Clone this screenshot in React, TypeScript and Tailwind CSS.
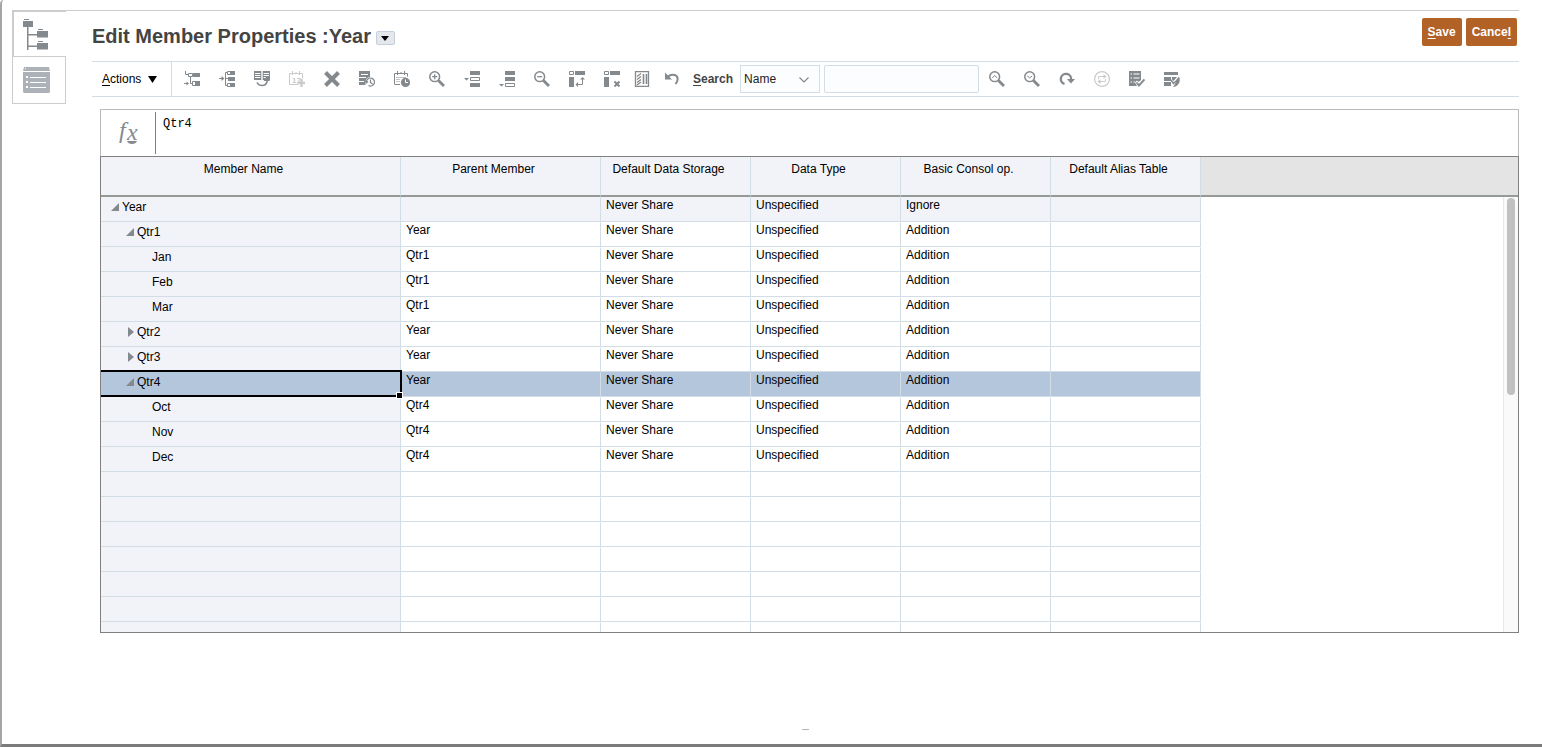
import type { ReactNode } from "react"

interface Member {
  name: string
  level: number
  state?: "open" | "closed"
  parent: string
  consol: string
}

const members: Member[] = [
  { name: "Year", level: 0, state: "open", parent: "", consol: "Ignore" },
  { name: "Qtr1", level: 1, state: "open", parent: "Year", consol: "Addition" },
  { name: "Jan", level: 2, parent: "Qtr1", consol: "Addition" },
  { name: "Feb", level: 2, parent: "Qtr1", consol: "Addition" },
  { name: "Mar", level: 2, parent: "Qtr1", consol: "Addition" },
  { name: "Qtr2", level: 1, state: "closed", parent: "Year", consol: "Addition" },
  { name: "Qtr3", level: 1, state: "closed", parent: "Year", consol: "Addition" },
  { name: "Qtr4", level: 1, state: "open", parent: "Year", consol: "Addition" },
  { name: "Oct", level: 2, parent: "Qtr4", consol: "Addition" },
  { name: "Nov", level: 2, parent: "Qtr4", consol: "Addition" },
  { name: "Dec", level: 2, parent: "Qtr4", consol: "Addition" },
]

const columns = [
  "Member Name",
  "Parent Member",
  "Default Data Storage",
  "Data Type",
  "Basic Consol op.",
  "Default Alias Table",
]

const selectedMember = "Qtr4"
const emptyRows = [0, 1, 2, 3, 4, 5, 6]
const indents = ["pl-[9px]", "pl-[24px]", "pl-[39px]"]

function Tool({ label, disabled, children }: { label: string; disabled?: boolean; children: ReactNode }) {
  return (
    <button
      type="button"
      aria-label={label}
      disabled={disabled}
      className={disabled ? "shrink-0 text-[#c9cbcd]" : "shrink-0 text-[#84898d]"}
    >
      <svg width="16" height="16" viewBox="0 0 16 16" fill="none" stroke="currentColor" className="block">
        {children}
      </svg>
    </button>
  )
}

function Magnifier({ children }: { children: ReactNode }) {
  return (
    <>
      <circle cx="5.7" cy="5.7" r="4.9" strokeWidth="1.5" />
      <path d="M9.4 9.4 15 15" strokeWidth="2.8" />
      {children}
    </>
  )
}

function LeftTools() {
  return (
    <div className="flex items-center gap-[19px]">
      <Tool label="Add child">
        <path d="M1.5 0v3.5H5M6.5 6v6.5H9M0 12.5h4" />
        <path d="M2.5 10.500v4l2.500-2z" fill="currentColor" stroke="none" />
        <path d="M4.500 2.500h4v3h-4zM8.500 10.500h3v4h-3z" />
        <path d="M9 2h7v4H9zM11 10h5v5h-5z" fill="currentColor" stroke="none" />
      </Tool>
      <Tool label="Add sibling">
        <path d="M8 1.500H6.500v13H8M6.500 7.500H9M0 7.500h4" />
        <path d="M2.500 5v5l3-2.500z" fill="currentColor" stroke="none" />
        <path d="M8.500.500h3v3h-3zM8.500 12.500h3v3h-3z" />
        <path d="M11 0h5v4h-5zM9 6h7v4H9zM11 12h5v4h-5z" fill="currentColor" stroke="none" />
      </Tool>
      <Tool label="Move">
        <path d="M0 0h7.300v9H0zM8.700 0H16v9H8.700z" fill="currentColor" stroke="none" />
        <path d="M1 2.500h5.300M1 4.500h5.300M1 6.500h5.300M9.700 2.500H15M9.700 4.500H15M9.700 6.500h2" stroke="white" />
        <path d="M3 11.500c2 4 8.500 4 10-.5V9" strokeWidth="1.600" />
        <path d="m9.500 10 3.500-4.500 3 4.500z" fill="currentColor" stroke="none" />
      </Tool>
      <Tool label="Add period" disabled>
        <path d="M.5 13.500v-11h13v5M.5 13.500H9M3.500 0v4M7 1v2M10.500 0v4" />
        <text
          x="3"
          y="12"
          fill="currentColor"
          stroke="none"
          className="font-['Liberation_Sans'] text-[8px] font-bold"
        >
          17
        </text>
        <path d="M12.500 8v8M8.500 12H16" strokeWidth="2.400" />
      </Tool>
      <Tool label="Delete">
        <path d="m1.500 1.500 13 13M14.500 1.500l-13 13" strokeWidth="4" />
      </Tool>
      <Tool label="Document history">
        <path d="M0 0h11v6C7.500 6.500 6 9 6.500 14H0z" fill="currentColor" stroke="none" />
        <path d="M2 3.500h7M0 6.500h7M0 10.500h5" stroke="white" />
        <path d="M7.500 11.500a4 4 0 1 1 2 3M11.500 8.500v3l2 1.500" strokeWidth="1.200" />
        <path d="m5.500 10 4 .3-2 2.700z" fill="currentColor" stroke="none" />
      </Tool>
      <Tool label="Schedule">
        <path d="M.5 13V2.500h13v3M.5 13.500H6M3.500 0v4M7 1v2M10.500 0v4" />
        <path d="M2.500 6.500h9M2.500 8.500h4M2.500 10.500h4" strokeDasharray="1 1" />
        <circle cx="11.500" cy="11.400" r="4.600" fill="currentColor" stroke="none" />
        <path d="M11.500 8.500v3h2.500" stroke="white" />
      </Tool>
      <Tool label="Zoom in">
        <Magnifier>
          <path d="M3.200 5.700h5M5.700 3.200v5" strokeWidth="1.300" />
        </Magnifier>
      </Tool>
      <Tool label="Insert above">
        <path d="M6 0h10v4H6zM6 12h10v4H6zM0 7h5L2.500 9.500z" fill="currentColor" stroke="none" />
        <path d="M6.500 6.500h9v3h-9z" />
      </Tool>
      <Tool label="Insert below">
        <path d="M6 0h10v4H6zM6 6h10v4H6zM0 13h5l-2.500 2.500z" fill="currentColor" stroke="none" />
        <path d="M6.500 12.500h9v3h-9z" />
      </Tool>
      <Tool label="Zoom out">
        <Magnifier>
          <path d="M3.200 5.700h5" strokeWidth="1.300" />
        </Magnifier>
      </Tool>
      <Tool label="Freeze">
        <path d="M.5.500h4v3h-4z" />
        <path d="M6 0h10v4H6zM0 6h5v10H0z" fill="currentColor" stroke="none" />
        <path d="M13.500 8v5.500H8" />
        <path d="m11 8.500 2.500-2.500L16 8.500zM9 11v5l-2.500-2.500z" fill="currentColor" stroke="none" />
      </Tool>
      <Tool label="Unfreeze">
        <path d="M.5.500h4v3h-4z" />
        <path d="M6 0h10v4H6zM0 6h5v10H0z" fill="currentColor" stroke="none" />
        <path d="m10.500 10.500 5 5M15.500 10.500l-5 5" strokeWidth="2" />
      </Tool>
    </div>
  )
}

function RightTools() {
  return (
    <div className="flex items-center gap-[19px]">
      <Tool label="Search up">
        <Magnifier>
          <path d="m3.200 6.700 2.500-2 2.500 2" />
        </Magnifier>
      </Tool>
      <Tool label="Search down">
        <Magnifier>
          <path d="m3.200 4.900 2.500 2 2.500-2" />
        </Magnifier>
      </Tool>
      <Tool label="Redo">
        <path d="M5.500 13a5.200 5.200 0 1 1 6.700-4.500" strokeWidth="2.300" />
        <path d="M8 8h8l-4 4.500z" fill="currentColor" stroke="none" />
      </Tool>
      <Tool label="Refresh" disabled>
        <circle cx="8" cy="8" r="7.400" strokeWidth="1.200" />
        <path d="M4.500 8V5.500H10M11.500 8v2.500H6" />
        <path d="m9.500 3 3 2.500-3 2.500zM6.500 8l-3 2.500 3 2.500z" fill="currentColor" stroke="none" />
      </Tool>
      <Tool label="Validate">
        <path d="M0 0h12v9l-2.500 2L8 9.500l-2 2L8 15H0z" fill="currentColor" stroke="none" />
        <path d="M1.500 3H3M1.500 7H3M1.500 11H3M4.500 3h6M4.500 7h6M4.500 11H6" stroke="white" />
        <path d="m7.500 11.500 2.500 3 5.500-6" strokeWidth="1.900" />
      </Tool>
      <Tool label="Validate row">
        <path d="M0 1h14v3H0zM0 6h7v4H0zM0 11h7v4H0z" fill="currentColor" stroke="none" />
        <path d="M8 6h5l-3.500 4L8 8.500zM12 9l3-3.500C17 10 15 15 9 16c1.500-2 3-4 3-7z" fill="currentColor" stroke="none" />
        <path d="m7 9 2.500 3.500L12 10" strokeWidth="1.500" />
      </Tool>
    </div>
  )
}

function Toolbar() {
  return (
    <div className="flex h-9 items-stretch border-y border-[#d3dde6]">
      <button type="button" className="flex w-20 shrink-0 items-center gap-[7px] border-r border-[#d3dde6] pl-[10px] text-black">
        <span>
          <span className="underline underline-offset-2">A</span>ctions
        </span>
        <svg width="9" height="7" viewBox="0 0 9 7">
          <path d="M0 0h9L4.500 7z" />
        </svg>
      </button>
      <div className="flex items-center pl-3">
        <LeftTools />
        <div className="ml-[14px] flex items-center gap-[14px]">
          <Tool label="Hatch">
            <path d="M1.500.500h13v15h-13z" strokeWidth="1.300" />
            <path d="M9.500 3v10M12.500 3v10" strokeWidth="1.600" />
            <path d="m3 5.500 4-3M3 8.500l4-3M3 11.500l4-3M3 14l4-3" strokeWidth="1.400" />
          </Tool>
          <Tool label="Undo">
            <path d="M4 5.500c4-3.500 10.500-1.500 9.500 3.500-.2 1.800-1 3-2 4" strokeWidth="2" />
            <path d="M1 1.500v7h7z" fill="currentColor" stroke="none" />
          </Tool>
        </div>
        <label htmlFor="search-by" className="ml-[13px] font-bold text-[#444444]">
          <span className="underline underline-offset-2">S</span>earch
        </label>
        <div className="relative ml-[7px]">
          <select
            id="search-by"
            className="block h-7 w-20 appearance-none border border-[#d3dde6] bg-[#fcfdfe] pl-[3px] text-[#222222]"
          >
            <option>Name</option>
          </select>
          <svg
            width="10"
            height="6"
            viewBox="0 0 10 6"
            fill="none"
            stroke="#84898d"
            className="pointer-events-none absolute top-[12px] right-[11px]"
          >
            <path d="m.5.500 4.500 4.500L9.500.500" strokeWidth="1.200" />
          </svg>
        </div>
        <input
          type="text"
          aria-label="Search text"
          className="mr-[10px] ml-1 h-7 w-[155px] rounded-xs border border-[#d3dde6] bg-[#fcfdfe] px-1"
        />
        <RightTools />
      </div>
    </div>
  )
}

function SideTabs() {
  return (
    <nav className="flex w-[54px] shrink-0 flex-col">
      <button
        type="button"
        aria-label="Hierarchy"
        className="flex h-[46px] border-t-2 border-l-2 border-[#cccccc] pt-[6px] pl-2"
      >
        <svg width="27" height="33" viewBox="0 0 27 33" fill="#84898d">
          <path d="M2 1h5v1H2zM1 3h10v6H1zM5 9h1.500v23H5zM6 16h9v1.500H6zM6 27.500h9V29H6zM16 11h5v1h-5zM15 13h11v6.500H15zM16 23h5v1h-5zM15 25h11v6.500H15z" />
        </svg>
      </button>
      <button type="button" aria-label="List" className="flex h-12 border border-[#cccccc] pt-[10px] pl-[10px]">
        <svg width="27" height="26" viewBox="0 0 27 26" fill="#adb1b8">
          <path d="M1 0h25l1 4H0zM0 5h27v20l-1 1H1l-1-1z" />
          <path d="M2 1h1v1H2zM3 9h2v2H3zM3 14h2v2H3zM3 19h2v2H3zM7 10h16v1H7zM7 15h16v1H7zM7 20h16v1H7z" fill="white" />
        </svg>
      </button>
    </nav>
  )
}

function NameCell({ member, selected }: { member: Member; selected: boolean }) {
  return (
    <td
      className={`relative border-r border-b border-[#d3dde6] pt-[2px] align-top ${indents[member.level]} ${
        selected ? "bg-[#b4c6dc]" : "bg-[#f2f3f8]"
      }`}
    >
      <div className="flex items-center gap-[3px]">
        <svg width="9" height="10" viewBox="0 0 9 10" fill="#84898d">
          {member.state === "open" && <path d="M9 1v8H1z" />}
          {member.state === "closed" && <path d="M3 0l6 5-6 5z" />}
        </svg>
        {member.name}
      </div>
      {selected && (
        <div className="pointer-events-none absolute -top-[2px] -right-[2px] -bottom-px left-0 z-10 border-2 border-l-0 border-black">
          <span className="absolute -right-[3px] -bottom-[4px] size-[7px] border border-white bg-black" />
        </div>
      )}
    </td>
  )
}

function MemberTable() {
  return (
    <div className="relative h-[477px] overflow-hidden border border-[#808080]">
      <table className="w-full table-fixed border-separate border-spacing-0">
        <colgroup>
          <col className="w-[300px]" />
          <col className="w-[200px]" />
          <col className="w-[150px]" />
          <col className="w-[150px]" />
          <col className="w-[150px]" />
          <col className="w-[150px]" />
          <col />
        </colgroup>
        <thead>
          <tr className="h-10">
            {columns.map((column) => (
              <th
                key={column}
                scope="col"
                className="border-r border-b-2 border-r-[#d3dde6] border-b-[#959a97] bg-[#f2f3f8] pt-1 pr-[14px] align-top font-normal"
              >
                {column}
              </th>
            ))}
            <td className="border-b-2 border-[#959a97] bg-[#e4e4e4]" />
          </tr>
        </thead>
        <tbody>
          {members.map((member) => {
            const selected = member.name === selectedMember
            const tone = selected
              ? "bg-[#b4c6dc] border-t-[#b4c6dc]"
              : member.level === 0
                ? "bg-[#f2f3f8] border-t-[#f2f3f8]"
                : "border-t-white"
            return (
              <tr key={member.name} className="h-[25px]">
                <NameCell member={member} selected={selected} />
                {[member.parent, "Never Share", "Unspecified", member.consol, ""].map((value, i) => (
                  <td
                    key={i}
                    className={`border-t border-r border-b border-r-[#d3dde6] border-b-[#d3dde6] pl-[5px] align-top leading-[14px] ${tone}`}
                  >
                    {value}
                  </td>
                ))}
                <td />
              </tr>
            )
          })}
          {emptyRows.map((row) => (
            <tr key={row} className="h-[25px]">
              <td className="border-r border-b border-[#d3dde6] bg-[#f2f3f8]" />
              {columns.slice(1).map((column) => (
                <td key={column} className="border-t border-r border-b border-[#d3dde6] border-t-white" />
              ))}
              <td />
            </tr>
          ))}
        </tbody>
      </table>
      {/* Scrollbar */}
      <div className="absolute top-10 right-0 bottom-0 w-[15px] border-l border-[#e8e8e8] bg-[#fafafa] pt-px pl-[3px]">
        <div className="h-[197px] w-2 rounded-full bg-[#c1c1c1]" />
      </div>
    </div>
  )
}

export default function App() {
  return (
    <div className="flex min-h-screen rounded-tl border-b-3 border-l-2 border-b-[#7b7b7b] border-l-[#a5a5a5] bg-white pt-[10px] pr-[23px] pl-[10px] font-['Liberation_Sans',Arial,sans-serif] text-[12px] leading-4 text-black">
      <SideTabs />
      <main className="flex min-w-0 flex-1 flex-col border-t border-[#cccccc] pl-[26px]">
        <header className="flex h-[50px] items-center justify-between pr-[2px]">
          <div className="flex items-center gap-[5px]">
            <h1 className="text-[20px] leading-6 font-bold text-[#444444]">Edit Member Properties :Year</h1>
            <button
              type="button"
              aria-label="Select dimension"
              className="mt-1 flex h-[14px] w-[19px] items-center justify-center rounded-xs border border-[#c4d0dc] bg-[#e4e8ec]"
            >
              <svg width="8" height="5" viewBox="0 0 8 5">
                <path d="M0 0h8L4 5z" />
              </svg>
            </button>
          </div>
          <div className="mb-2 flex gap-1 font-bold text-white">
            <button type="button" className="h-7 rounded-xs bg-[#b26127] px-1.5">
              <span className="underline underline-offset-2">S</span>ave
            </button>
            <button type="button" className="h-7 rounded-xs bg-[#b26127] px-1.5">
              Cance<span className="underline underline-offset-2">l</span>
            </button>
          </div>
        </header>
        <Toolbar />

        <section className="mt-3 pl-2">
          {/* Formula bar */}
          <div className="flex h-[47px] border border-b-0 border-[#bbbbbb]">
            <div className="my-[2px] flex w-[55px] shrink-0 justify-center border-r border-[#808080]">
              <svg width="40" height="42" viewBox="0 0 40 42" fill="#84898d" className="overflow-visible" aria-label="Formula">
                <text x="11" y="26" className="font-['Liberation_Serif'] text-[24px] leading-6 italic">
                  f
                </text>
                <text x="19" y="28" className="font-['Liberation_Serif'] text-[24px] leading-6 italic">
                  x
                </text>
                <path d="M19 29h10c-1 4-9 4-10 0z" />
              </svg>
            </div>
            <textarea
              aria-label="Cell value"
              defaultValue="Qtr4"
              className="flex-1 resize-none overflow-hidden px-[7px] pt-[6px] font-['Liberation_Mono',monospace] text-[12px] leading-4 outline-none"
            />
          </div>
          <MemberTable />
        </section>

        <div className="mt-auto mb-[14px] h-px w-[7px] self-center bg-[#b5b5b5]" />
      </main>
    </div>
  )
}
